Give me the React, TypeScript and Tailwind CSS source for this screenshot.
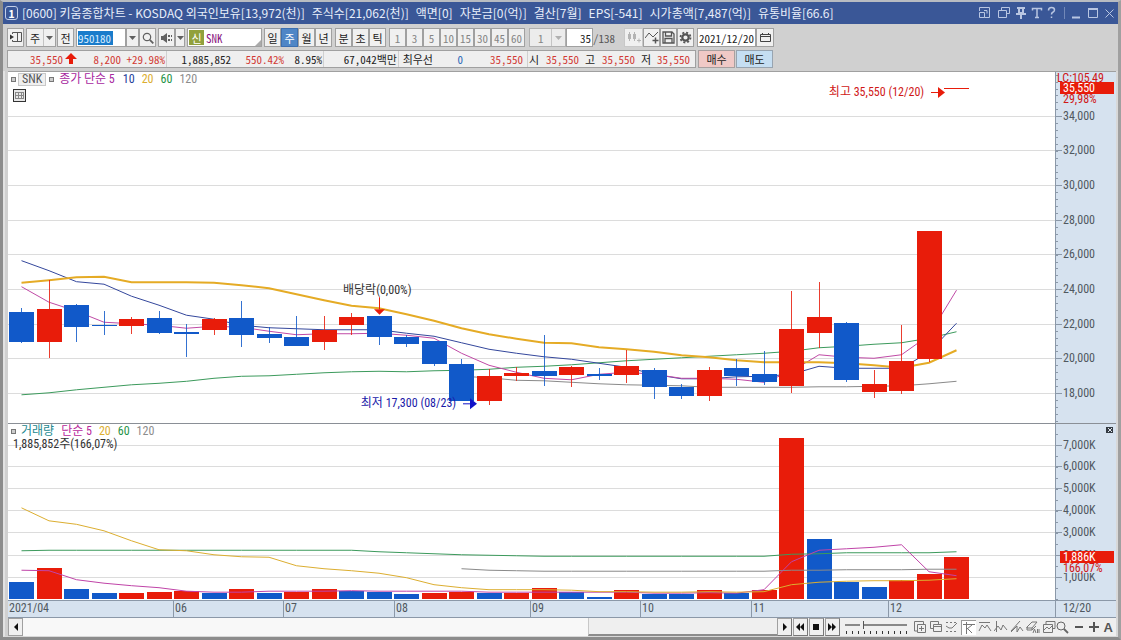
import { useState, type ReactNode } from 'react';

const UP = '#e81c0a';
const DOWN = '#1159c9';

// chart plot area, in chart units
const LEFT = 8;
const WIDTH = 1047;
const PRICE_TOP = 72;
const PRICE_HEIGHT = 351;
const VOL_TOP = 424;
const VOL_HEIGHT = 176;
const STEP = 27.5;

const centerX = (i: number) => 21.5 + i * STEP;

// [up, body top, body bottom, high, low]
type Candle = [number, number, number, number, number];

const candles: Candle[] = [
  [0, 312, 342, 308, 343],
  [1, 309, 342, 280, 358],
  [0, 305, 327, 304, 342],
  [0, 325, 326, 311, 335],
  [1, 319, 326, 317, 334],
  [0, 318, 333, 311, 334],
  [0, 332, 334, 324, 357],
  [1, 319, 330, 318, 335],
  [0, 318, 335, 301, 347],
  [0, 334, 338, 327, 343],
  [0, 337, 346, 316, 346],
  [1, 330, 342, 316, 350],
  [1, 317, 325, 313, 335],
  [0, 316, 337, 316, 345],
  [0, 337, 344, 335, 347],
  [0, 341, 364, 341, 366],
  [0, 364, 401, 359, 401],
  [1, 376, 401, 369, 405],
  [1, 373, 376, 367, 381],
  [0, 371, 376, 335, 386],
  [1, 367, 375, 366, 387],
  [0, 374, 376, 368, 380],
  [1, 366, 375, 350, 383],
  [0, 370, 387, 368, 399],
  [0, 387, 396, 384, 399],
  [1, 370, 396, 367, 401],
  [0, 368, 376, 359, 386],
  [0, 374, 382, 351, 385],
  [1, 329, 386, 291, 393],
  [1, 317, 333, 282, 348],
  [0, 323, 380, 322, 382],
  [1, 384, 392, 370, 398],
  [1, 361, 391, 325, 394],
  [1, 231, 359, 231, 362],
  [1, 88, 89, 88, 89],
];

// [up, bar top]
const volumes: [number, number][] = [
  [0, 582], [1, 568], [0, 589], [0, 593], [1, 593], [1, 592], [1, 591], [0, 593], [1, 589],
  [0, 593], [1, 592], [1, 589], [0, 591], [0, 592], [0, 594], [1, 593], [1, 592], [0, 593],
  [1, 593], [1, 588], [0, 592], [0, 597], [1, 590], [0, 594], [0, 594], [1, 590], [0, 593],
  [1, 590], [1, 438], [0, 539], [0, 582], [0, 587], [1, 580], [1, 574], [1, 557],
];

interface Average {
  color: string;
  start: number;
  width?: number;
  values: number[];
}

const priceAverages: Average[] = [
  { color: '#8a8a8a', start: 16, values: [376, 377.5, 380, 380.5, 382, 383.5, 384.5, 385, 385.5, 387, 387, 387, 387, 386.5, 386.5, 386, 385.5, 383.5, 381] },
  { color: '#3c9a5c', start: 0, values: [394.5, 392.5, 389.5, 387, 384.5, 383, 381, 378, 376, 375.5, 374, 372.5, 371.5, 371, 371.5, 370.5, 370, 369, 367, 366, 364.5, 362.5, 360.5, 359, 357.5, 356, 354.5, 353, 351, 347.5, 346, 344, 342.5, 338, 331.5] },
  { color: '#34479c', start: 0, values: [260.5, 270.5, 281.5, 284, 296, 305, 315, 319, 325, 327.5, 328.5, 329.5, 329.5, 329.5, 333, 336, 342.5, 349, 353, 356.5, 359, 363, 367, 374, 378.5, 378.5, 376.5, 376, 374, 366, 368, 368, 368, 352, 323] },
  { color: '#c04aa6', start: 0, values: [286.5, 302, 311, 322, 323.5, 325, 328, 326, 327, 331, 334.5, 333.5, 333.5, 333, 335, 338, 353, 365, 372, 378, 379.5, 374, 372, 374, 378, 378, 379, 382, 371, 354.5, 357, 358, 354.5, 335, 290] },
  { color: '#e5ab25', start: 0, width: 2, values: [282.5, 280, 277, 276.5, 282, 282, 282, 282.5, 285, 288, 294, 300, 305.5, 308, 314, 320.5, 328, 334, 338.5, 342.5, 343, 347, 349, 351.5, 355, 357, 360, 362, 362, 362, 363, 365, 367.5, 362.5, 350] },
];

const volumeAverages: Average[] = [
  { color: '#8a8a8a', start: 16, values: [569, 570.5, 571, 571.5, 571.5, 571.5, 571.5, 571.5, 571.5, 571.5, 571.5, 571.5, 570.5, 570.5, 570, 570, 570, 569.5, 569.5] },
  { color: '#3c9a5c', start: 0, values: [551, 550.5, 550.5, 550.5, 550.5, 550.5, 550.5, 550.5, 550.5, 550.5, 550.5, 550.5, 550.5, 552, 553, 554, 555, 555.5, 556, 556.5, 556.5, 556.5, 556.5, 556.5, 556.5, 556.5, 556.5, 556.5, 554.5, 554, 553, 553, 553, 553, 552] },
  { color: '#c044a8', start: 0, values: [570.5, 571, 580, 583.5, 586, 588, 591.5, 592.5, 592.5, 591.5, 591.5, 591.5, 591, 591.5, 591.5, 591.5, 591.5, 592.5, 592.5, 592.5, 592.5, 592.5, 592.5, 593.5, 593.5, 593, 593.5, 590, 562, 550.5, 549, 547.5, 545, 572, 576] },
  { color: '#dcae30', start: 0, values: [508, 521, 524.5, 531, 541, 550, 551, 555, 557, 557.5, 566, 569, 571, 573.5, 578, 585, 588, 590, 590, 590, 590.5, 592, 592, 592.5, 592.5, 592, 592.5, 592, 585, 582.5, 581.5, 581, 581, 580.5, 579] },
];

const priceTicks = [
  { label: '34,000', y: 116 },
  { label: '32,000', y: 150 },
  { label: '30,000', y: 185 },
  { label: '28,000', y: 220 },
  { label: '26,000', y: 254 },
  { label: '24,000', y: 289 },
  { label: '22,000', y: 324 },
  { label: '20,000', y: 358 },
  { label: '18,000', y: 393 },
];

const volumeTicks = [
  { label: '7,000K', y: 445 },
  { label: '6,000K', y: 466 },
  { label: '5,000K', y: 488 },
  { label: '4,000K', y: 510 },
  { label: '3,000K', y: 532 },
  { label: '2,000K', y: 555 },
  { label: '1,000K', y: 577 },
];

const chartFont = "font-['Roboto_Condensed','Noto_Sans_CJK_KR',sans-serif]";
const titleFont = "font-['Noto_Sans_CJK_KR',sans-serif]";
const monoFont = "font-['Noto_Sans_Mono_CJK_KR','Noto_Sans_CJK_KR',monospace]";

function AverageLine({ line }: { line: Average }) {
  const points = line.values.map((v, i) => `${centerX(line.start + i)},${v}`).join(' ');
  return (
    <polyline
      points={points}
      fill="none"
      stroke={line.color}
      strokeWidth={line.width ?? 1}
      vectorEffect="non-scaling-stroke"
    />
  );
}

function GridLines({ ticks }: { ticks: { y: number }[] }) {
  return (
    <g fill="#dcdcdc" shapeRendering="crispEdges">
      {ticks.map((t) => (
        <rect key={t.y} x={LEFT} y={t.y} width={WIDTH} height={1} />
      ))}
    </g>
  );
}

function PricePlot() {
  return (
    <svg
      className="absolute inset-0 h-full w-full"
      viewBox={`${LEFT} ${PRICE_TOP} ${WIDTH} ${PRICE_HEIGHT}`}
      preserveAspectRatio="none"
    >
      <GridLines ticks={priceTicks} />
      {priceAverages.map((line) => (
        <AverageLine key={line.color} line={line} />
      ))}
      <g shapeRendering="crispEdges">
        {candles.map(([up, top, bottom, high, low], i) => (
          <g key={i} fill={up ? UP : DOWN}>
            <rect x={Math.floor(centerX(i))} y={high} width={1} height={low - high} opacity={0.85} />
            <rect x={centerX(i) - 12.5} y={top} width={25} height={bottom - top} />
          </g>
        ))}
      </g>
      <path d="M379.500 297v12" stroke={UP} />
      <path d="M374 309h11l-5.500 5.500z" fill={UP} />
      <path d="M931 92.500h8" stroke={UP} />
      <path d="M938 87v11l7-5.500z" fill={UP} />
      <path d="M463 403.500h8" stroke="#1212c8" />
      <path d="M470 398v11l7-5.500z" fill="#1212c8" />
    </svg>
  );
}

function VolumePlot() {
  return (
    <svg
      className="absolute inset-0 h-full w-full"
      viewBox={`${LEFT} ${VOL_TOP} ${WIDTH} ${VOL_HEIGHT}`}
      preserveAspectRatio="none"
    >
      <GridLines ticks={volumeTicks} />
      <g shapeRendering="crispEdges">
        {volumes.map(([up, top], i) => (
          <rect key={i} x={centerX(i) - 12.5} y={top} width={25} height={599 - top} fill={up ? UP : DOWN} />
        ))}
      </g>
      {volumeAverages.map((line) => (
        <AverageLine key={line.color} line={line} />
      ))}
    </svg>
  );
}

interface AxisProps {
  ticks: { label: string; y: number }[];
  top: number;
  height: number;
  minor: number;
}

function Axis({ ticks, top, height, minor }: AxisProps) {
  const minorTicks: number[] = [];
  for (let y = ticks[ticks.length - 1].y; y > top; y -= minor) minorTicks.push(y);
  for (let y = ticks[ticks.length - 1].y; y < top + height; y += minor) minorTicks.push(y);
  return (
    <>
      <svg
        className="absolute inset-y-0 left-0 h-full w-2"
        viewBox={`0 ${top} 8 ${height}`}
        preserveAspectRatio="none"
        shapeRendering="crispEdges"
      >
        {minorTicks.map((y, i) => (
          <rect key={i} x={0} y={Math.round(y)} width={2} height={1} fill="#8b98a8" />
        ))}
        {ticks.map((t) => (
          <rect key={t.y} x={0} y={t.y} width={6} height={1} fill="#8b98a8" />
        ))}
      </svg>
      {ticks.map((t) => (
        <span
          key={t.label}
          className="absolute left-[7px] -translate-y-1/2 text-xs leading-4 text-[#505860]"
          style={{ top: `${((t.y - top) / height) * 100}%` }}
        >
          {t.label}
        </span>
      ))}
    </>
  );
}

function ToolButton({ children, label, className = '' }: { children: ReactNode; label?: string; className?: string }) {
  return (
    <button
      type="button"
      aria-label={label}
      className={`flex shrink-0 items-center justify-center self-stretch border border-[#a0a0a0] bg-[#f0f0f0] ${className}`}
    >
      {children}
    </button>
  );
}

function Caret({ className = 'text-[#606060]' }: { className?: string }) {
  return (
    <svg className={`h-1 w-[7px] ${className}`} viewBox="0 0 7 4" fill="currentColor">
      <path d="M0 0h7L3.500 4z" />
    </svg>
  );
}

const titleFields = [
  '[0600] 키움종합차트 - KOSDAQ 외국인보유[13,972(천)]',
  '주식수[21,062(천)]',
  '액면[0]',
  '자본금[0(억)]',
  '결산[7월]',
  'EPS[-541]',
  '시가총액[7,487(억)]',
  '유통비율[66.6]',
];

function TitleBar() {
  return (
    <header className={`flex h-[22px] shrink-0 items-center justify-between bg-[#3a5797] pl-[2px] pr-1 text-xs text-[#e8eefa] ${titleFont}`}>
      <div className="flex min-w-0 items-center gap-1">
        <span className="flex h-[14px] w-[13px] shrink-0 items-center justify-center rounded-[3px] border border-[#c3cfe8] text-[11px] font-bold text-white">
          1
        </span>
        <h1 className="flex gap-[7px] overflow-hidden whitespace-nowrap">
          {titleFields.map((field) => (
            <span key={field}>{field}</span>
          ))}
        </h1>
      </div>
      <svg className="h-4 w-[136px] shrink-0" viewBox="0 0 136 16" fill="none" stroke="#b9c6e2">
        <path d="M1.500 6V2.500h10v10H6.500M1.500 7.500h5v5h-5zM6 5.500h3v3" />
        <path d="M23.500 5.500v-3h8v6h-3M20.500 5.500h8v7h-8z" />
        <path d="M39 3h8M41 3v5h4V3M38 9h10M43 9v5" strokeWidth="2" />
        <path d="M54.500 5.500V3.500h9v2M59 3.500v9M57 12.500h4" strokeWidth="1.500" />
        <path d="M70.500 5.500q0-3 3-3t3 2.500q0 1.500-2 2.500-1 .6-1 2M73.500 11.500v1.500" strokeWidth="1.500" />
        <path d="M86.500 2v12" stroke="#7288b8" />
        <path d="M94 12.500h8" strokeWidth="2" />
        <path d="M110.500 4.500h9v8h-9z" />
        <path d="M110 4h10" strokeWidth="2" />
        <path d="M127.500 4.500l8 8M135.500 4.500l-8 8" />
      </svg>
    </header>
  );
}

const periods = ['일', '주', '월', '년'];
const units = ['분', '초', '틱'];
const minutes = ['1', '3', '5', '10', '15', '30', '45', '60'];

function Toolbar() {
  const [period, setPeriod] = useState('주');
  return (
    <div className={`flex h-[19px] items-center text-[11px] leading-4 text-[#222] ${monoFont}`}>
      <ToolButton label="패널" className="w-[17px]">
        <svg className="h-[13px] w-[13px]" viewBox="0 0 13 13" fill="none" stroke="#555">
          <path d="M3.500 3V1.500h9v9h-9V9M8.500 2v8" />
          <path d="M1 3.500v5l4-2.500z" fill="#333" stroke="none" />
        </svg>
      </ToolButton>
      <div className="relative ml-[2px] flex h-[19px] w-[30px] items-center border border-[#a0a0a0] bg-[#f0f0f0]">
        <select aria-label="구분" className="h-full w-full appearance-none bg-transparent pl-[3px]">
          <option>주</option>
        </select>
        <span className="pointer-events-none absolute inset-y-0 right-0 flex w-3 items-center justify-center border-l border-[#c4c4c4]">
          <Caret />
        </span>
      </div>
      <ToolButton className="ml-[1px] w-[17px]">전</ToolButton>
      <div className="ml-[2px] flex h-[19px] w-[50px] items-center border border-[#a0a0a0] bg-white pl-[1px]">
        <input
          aria-label="종목코드"
          defaultValue="950180"
          className="h-[14px] w-[35px] bg-[#1a7ccb] text-[#d8ecff] outline-none"
        />
      </div>
      <ToolButton label="종목 목록" className="w-[13px]"><Caret /></ToolButton>
      <ToolButton label="검색" className="w-[17px]">
        <svg className="h-3 w-3" viewBox="0 0 12 12" fill="none" stroke="#606060">
          <circle cx="5" cy="5" r="3.700" strokeWidth="1.200" />
          <path d="M7.800 7.800l3.500 3.500" strokeWidth="1.800" />
        </svg>
      </ToolButton>
      <ToolButton label="음성" className="ml-[2px] w-[17px]">
        <svg className="h-3 w-3" viewBox="0 0 12 12" fill="#606060">
          <path d="M0 4h2l4-3v10L2 8H0zM7 3h2v2H7zM7 7h2v2H7zM10 3h1v2h-1zM10 7h1v2h-1z" />
        </svg>
      </ToolButton>
      <ToolButton label="음성 설정" className="w-[10px]"><Caret /></ToolButton>
      <div className="relative ml-[2px] flex h-[19px] w-[75px] items-center border border-[#a0a0a0] bg-white pl-[1px]">
        <span className="flex h-[15px] w-[15px] items-center justify-center bg-[#91a03c] text-white">신</span>
        <span className="pl-[2px] text-[#8a1480]">SNK</span>
        <svg className="absolute bottom-0 right-0 h-[6px] w-[6px]" viewBox="0 0 6 6">
          <path d="M6 0v6H0z" fill="#aaa" />
        </svg>
      </div>
      <div className="ml-[2px] flex">
        {periods.map((p) => (
          <button
            key={p}
            type="button"
            onClick={() => setPeriod(p)}
            className={`flex h-[19px] w-[17px] items-center justify-center border ${
              p === period ? 'border-[#3d6fb0] bg-[#4f86c6] text-white' : 'border-[#a0a0a0] bg-[#f0f0f0]'
            }`}
          >
            {p}
          </button>
        ))}
      </div>
      <div className="ml-[3px] flex self-stretch">
        {units.map((u) => (
          <ToolButton key={u} className="w-[17px]">{u}</ToolButton>
        ))}
      </div>
      <div className="ml-[3px] flex self-stretch text-[#858585]">
        {minutes.map((m) => (
          <ToolButton key={m} className="w-[17px]">{m}</ToolButton>
        ))}
      </div>
      <div className="relative ml-[4px] h-[19px] w-[37px] border border-[#b0b0b0] bg-[#ececec] text-[#858585]">
        <select aria-label="간격" className="h-full w-full appearance-none bg-transparent pl-[8px]">
          <option>1</option>
        </select>
        <span className="pointer-events-none absolute inset-y-0 right-0 flex w-[14px] items-center justify-center border-l border-[#c4c4c4]">
          <Caret className="text-[#b0b0b0]" />
        </span>
      </div>
      <input
        aria-label="표시 개수"
        defaultValue="35"
        className="h-[19px] w-[27px] border border-[#a0a0a0] bg-white pr-[1px] text-right"
      />
      <span className="w-[31px] text-[#555]">/138</span>
      <ToolButton label="캔들" className="w-[19px] border-[#c8c8c8] bg-[#dedede]">
        <svg className="h-3 w-[14px]" viewBox="0 0 14 12" fill="#b4b4b4">
          <path d="M1 2h3v5H1zM2 0h1v9H2zM6 2h3v5H6zM7 0h1v9H7zM10 8h4v1h-4zM11.500 6.500h1v4h-1z" />
        </svg>
      </ToolButton>
      <ToolButton label="지표 추가" className="w-[17px]">
        <svg className="h-[13px] w-[14px]" viewBox="0 0 14 13" fill="none" stroke="#555">
          <path d="M0 7l4-5 4 4 5-5" />
          <path d="M10.500 6.500v6M7.500 9.500h6" strokeWidth="1.500" />
        </svg>
      </ToolButton>
      <ToolButton label="저장" className="w-[17px]">
        <svg className="h-[13px] w-[13px]" viewBox="0 0 13 13" fill="none" stroke="#555" strokeWidth="1.300">
          <path d="M1 1h9l2 2v9H1zM3.500 1v4h6V1M3 12V7.500h7V12" />
        </svg>
      </ToolButton>
      <ToolButton label="설정" className="w-[17px]">
        <svg className="h-[13px] w-[13px]" viewBox="0 0 13 13" fill="none" stroke="#555">
          <circle cx="6.500" cy="6.500" r="3.200" strokeWidth="2.200" />
          <circle cx="6.500" cy="6.500" r="5" strokeWidth="1.800" strokeDasharray="2 1.930" />
        </svg>
      </ToolButton>
      <input
        aria-label="기준일"
        defaultValue="2021/12/20"
        className="ml-[3px] h-[19px] w-[59px] border border-[#a0a0a0] bg-white pl-[1px]"
      />
      <ToolButton label="달력" className="w-[18px]">
        <svg className="h-[11px] w-[11px]" viewBox="0 0 11 11" fill="none" stroke="#444">
          <path d="M.5 2.500h10v7H.5zM.5 4.500h10" />
          <path d="M2.500 1v2M8.500 1v2" />
        </svg>
      </ToolButton>
    </div>
  );
}

function QuoteRow() {
  return (
    <div className={`flex h-[18px] items-center text-[11px] leading-4 text-[#222] ${monoFont}`}>
      <div className="flex h-full items-center border border-[#a0a0a0] bg-[#efefef] text-[#d23a34]">
        <span className="w-[55px] text-right">35,550</span>
        <svg className="ml-[2px] h-3 w-3" viewBox="0 0 12 12" fill={UP}>
          <path d="M6 0l6 6H8v5H4V6H0z" />
        </svg>
        <span className="w-[44px] text-right">8,200</span>
        <span className="w-[44px] text-right">+29.98%</span>
        <span className="ml-[1px] h-full w-[65px] border-l border-[#d0d0d0] text-right text-[#222]">1,885,852</span>
        <span className="w-[53px] text-right">550.42%</span>
        <span className="w-[38px] text-right text-[#222]">8.95%</span>
        <span className="ml-[1px] h-full w-[74px] border-l border-[#d0d0d0] text-right text-[#222]">67,042백만</span>
        <span className="ml-[1px] h-full w-[35px] border-l border-[#d0d0d0] text-right text-[#222]">최우선</span>
        <span className="w-[30px] text-right text-[#2b66b8]">0</span>
        <span className="w-[60px] text-right">35,550</span>
        <span className="ml-[4px] h-full w-[12px] border-l border-[#d0d0d0] text-right text-[#222]">시</span>
        <span className="w-[40px] text-right">35,550</span>
        <span className="w-[16px] text-right text-[#222]">고</span>
        <span className="w-[40px] text-right">35,550</span>
        <span className="w-[16px] text-right text-[#222]">저</span>
        <span className="w-[40px] pr-[1px] text-right">35,550</span>
        <span className="w-1" />
      </div>
      <button type="button" className="ml-[2px] h-full w-[37px] border border-[#a8a0a0] bg-[#f0c9c6] leading-none">매수</button>
      <button type="button" className="ml-[1px] h-full w-[37px] border border-[#98a4b0] bg-[#c5def2] leading-none">매도</button>
    </div>
  );
}

function LegendBox() {
  return <span className="h-[5px] w-[5px] border border-[#777] bg-[#ccc]" />;
}

function PricePanel() {
  return (
    <section className="flex min-h-0 flex-[352] border-b border-[#8a8f96]">
      <div className="relative flex-1 overflow-hidden bg-white">
        <PricePlot />
        <div className="relative flex items-center pl-[3px] pt-[1px] text-xs leading-[13px]">
          <LegendBox />
          <span className="ml-[2px] border border-[#c8c8c8] bg-[#efefef] px-[3px] leading-[11px] text-[#555]">SNK</span>
          <span className="ml-[3px] flex"><LegendBox /></span>
          <span className="ml-[5px] text-[#a828a0]">종가 단순 5</span>
          <span className="ml-2 text-[#24409a]">10</span>
          <span className="ml-[7px] text-[#dcae30]">20</span>
          <span className="ml-[7px] text-[#1f9347]">60</span>
          <span className="ml-[7px] text-[#8c8c8c]">120</span>
        </div>
        <button type="button" aria-label="표" className="relative ml-[5px] mt-[3px] block h-[13px] w-[13px]">
          <svg className="h-full w-full" viewBox="0 0 13 13" fill="none" stroke="#333" shapeRendering="crispEdges">
            <path d="M.5.5h12v12H.5z" fill="#e8e8e8" />
            <path d="M2 3.500h9M2 6.500h9M2 9.500h9M2.500 3v7M5.500 3v7M8.500 3v7M10.500 3v7" stroke="#888" />
          </svg>
        </button>
        <span className="absolute left-[78.400%] top-[3.700%] text-xs leading-[14px] text-[#d01818]">최고 35,550 (12/20)</span>
        <span className="absolute left-[32%] top-[60%] text-xs leading-[14px] text-[#333]">배당락(0,00%)</span>
        <span className="absolute left-[33.700%] top-[92.200%] text-xs leading-[14px] text-[#1a1aa8]">최저 17,300 (08/23)</span>
      </div>
      <div className="relative w-[61px] shrink-0 overflow-hidden border-l border-[#8b98a8] bg-[#d6e2ef]">
        <Axis ticks={priceTicks} top={PRICE_TOP} height={PRICE_HEIGHT} minor={6.92} />
        <div className="absolute inset-x-0 top-0 text-xs leading-3 text-[#d01818]">
          <div className="h-[10px] whitespace-nowrap pl-[1px]">LC:105,49</div>
          <div className="relative ml-1 mr-[2px] bg-[#e81c0a] pl-[3px] text-white">35,550</div>
          <div className="pl-[7px] leading-[11px]">29,98%</div>
        </div>
      </div>
    </section>
  );
}

function VolumePanel() {
  return (
    <section className="flex min-h-0 flex-[176]">
      <div className="relative flex-1 overflow-hidden bg-white">
        <VolumePlot />
        <div className="relative flex items-center pl-[3px] pt-[1px] text-xs leading-[13px]">
          <LegendBox />
          <span className="ml-[5px] text-[#23898f]">거래량</span>
          <span className="ml-[7px] text-[#b8289c]">단순 5</span>
          <span className="ml-[7px] text-[#dcae30]">20</span>
          <span className="ml-[7px] text-[#1f9347]">60</span>
          <span className="ml-[7px] text-[#8c8c8c]">120</span>
        </div>
        <p className="relative pl-[5px] text-xs leading-[12px] text-[#333]">1,885,852주(166,07%)</p>
      </div>
      <div className="relative w-[61px] shrink-0 overflow-hidden border-l border-[#8b98a8] bg-[#d6e2ef]">
        <Axis ticks={volumeTicks} top={VOL_TOP} height={VOL_HEIGHT} minor={11} />
        <button
          type="button"
          aria-label="닫기"
          className="absolute right-[3px] top-[3px] flex h-[6px] w-[7px] items-center justify-center bg-[#333a42]"
        >
          <svg className="h-1 w-1" viewBox="0 0 4 4" stroke="#dfe6ee"><path d="M0 0l4 4M4 0L0 4" /></svg>
        </button>
        <div className="absolute inset-x-0 top-[72%] text-xs leading-3">
          <div className="ml-1 mr-[2px] bg-[#e81c0a] pl-[3px] text-white">1,886K</div>
          <div className="ml-[7px] h-[10px] w-[42px] bg-[#d6e2ef] leading-[10px] text-[#d01818]">166,07%</div>
        </div>
      </div>
    </section>
  );
}

function DateAxis() {
  return (
    <div className="flex h-[18px] shrink-0 border-y border-[#8b98a8] bg-[#d6e2ef] text-xs leading-[15px] text-[#505860]">
      <div className="grid flex-1 grid-cols-[330fr_220fr_222fr_272fr_220fr_222fr_274fr_334fr]">
        <span className="pl-[1px]">2021/04</span>
        {['06', '07', '08', '09', '10', '11', '12'].map((m) => (
          <span key={m} className="border-l border-[#8b98a8] pl-[1px]">{m}</span>
        ))}
      </div>
      <span className="w-[61px] border-l border-[#8b98a8] pl-[7px]">12/20</span>
    </div>
  );
}

const playIcons = [
  { label: '재생', d: 'M4 1v8l4-4z' },
  { label: '뒤로', d: 'M5 1v8L1 5zM9 1v8L5 5z' },
  { label: '정지', d: 'M2 2h6v6H2z' },
  { label: '앞으로', d: 'M1 1v8l4-4zM5 1v8l4-4z' },
];

const drawTools = [
  { label: '화면 추가', d: 'M4 11H1.500V1.500h9V4M4.500 4.500h8v8h-8zM8.500 6v5M6 8.500h5' },
  { label: '화면 복사', d: 'M4 8.500H1.500v-7h8V4M4.500 4.500h8v7h-8zM4.500 6.500h8' },
  { label: '추세선', d: 'M1 2.500h2M5 2.500h2M9 2.500h2M1 11.500h2M5 11.500h2M9 11.500h2M1 6l3 2 3 0 5-5' },
  { label: '십자선', d: 'M1 3.500h12M4.500 1v12M5 8l5-4M5 7l5 5' },
  { label: '고점', d: 'M1 2.500h11M1 11l3-6 3 3 2-3 4 6' },
  { label: '저점', d: 'M2.500 1v11M0 11l4-5 3 4 2-5 4 5' },
  { label: '분석', d: 'M1 11L10 1M1 12l6-6 0 6 3-5 3 4' },
  { label: '전체 지우기', d: 'M1 7l5-5h5L6 8H1zM1 7v3h5V8M6 10l4-4M7 13l1.500-4L10 13M11.500 9v4M13 9v4' },
  { label: '이미지', d: 'M4 4V1.500h9v7h-2M1.500 4.500h9v8h-9zM2 10l3-3 2 2 3-3' },
];

function BottomBar() {
  const [speed, setSpeed] = useState(28);
  return (
    <footer className="flex h-[18px] shrink-0 items-center bg-[#efefef]">
      <ToolButton label="왼쪽" className="w-[15px]">
        <svg className="h-2 w-2" viewBox="0 0 8 8"><path d="M6 0v8L2 4z" fill="#111" /></svg>
      </ToolButton>
      <div className="flex h-full flex-1 bg-[#f8f8f8]">
        <div className="ml-auto h-full w-1/4 border-b-2 border-l border-b-[#8c8c8c] border-l-[#c8c8c8] bg-[#efefef]" />
      </div>
      <div className="flex gap-[1px] self-stretch">
        {playIcons.map((icon) => (
          <ToolButton key={icon.label} label={icon.label} className="w-[15px] border-b-[#777] border-r-[#777]">
            <svg className="h-[10px] w-[10px]" viewBox="0 0 10 10" fill="#111"><path d={icon.d} /></svg>
          </ToolButton>
        ))}
      </div>
      <div className="relative ml-1 h-[18px] w-[64px]">
        <svg className="absolute inset-0 h-full w-full" viewBox="0 0 64 18" shapeRendering="crispEdges">
          <path d="M1 6.500h62" stroke="#888" strokeWidth="2" />
          <path d="M2.500 13v3M8.500 13v3M14.500 13v3M20.500 13v3M26.500 13v3M32.500 13v3M38.500 13v3M44.500 13v3M50.500 13v3M56.500 13v3M62.500 13v3" stroke="#333" />
        </svg>
        <input
          type="range"
          aria-label="재생 속도"
          value={speed}
          onChange={(e) => setSpeed(Number(e.target.value))}
          className="absolute left-0 top-[3px] h-2 w-full appearance-none bg-transparent [&::-webkit-slider-thumb]:h-2 [&::-webkit-slider-thumb]:w-1 [&::-webkit-slider-thumb]:appearance-none [&::-webkit-slider-thumb]:border-r [&::-webkit-slider-thumb]:border-[#555] [&::-webkit-slider-thumb]:bg-[#efefef]"
        />
      </div>
      <div className="ml-[5px] flex items-center gap-[2px]">
        {drawTools.map((tool, i) => (
          <button
            key={tool.label}
            type="button"
            aria-label={tool.label}
            className={i === 3 ? 'border-l border-t border-[#999] bg-white' : ''}
          >
            <svg className="h-[14px] w-[14px]" viewBox="0 0 14 14" fill="none" stroke="#777">
              <path d={tool.d} />
            </svg>
          </button>
        ))}
      </div>
      <div className="flex items-center gap-[5px] pr-[3px]">
        <button type="button" aria-label="찾기">
          <svg className="h-[13px] w-[13px]" viewBox="0 0 13 13" fill="none" stroke="#666">
            <circle cx="5" cy="5" r="4" />
            <path d="M8 8l4 4" strokeWidth="1.800" />
          </svg>
        </button>
        <button type="button" aria-label="축소">
          <svg className="h-[10px] w-[10px]" viewBox="0 0 10 10" stroke="#555" strokeWidth="2"><path d="M1 5h8" /></svg>
        </button>
        <button type="button" aria-label="확대">
          <svg className="h-[10px] w-[10px]" viewBox="0 0 10 10" stroke="#555" strokeWidth="2"><path d="M0 5h10M5 0v10" /></svg>
        </button>
        <button type="button" className="font-['Liberation_Sans',sans-serif] text-[13px] font-bold leading-none text-[#555]">A</button>
      </div>
    </footer>
  );
}

export default function App() {
  return (
    <div className="flex h-screen flex-col border-b-[3px] border-l-[3px] border-r-[3px] border-t-2 border-b-[#8c8c8c] border-l-[#8c8c8c] border-r-[#a0a0a0] border-t-[#b8bcc2]">
      <TitleBar />
      <div className="flex min-h-0 flex-1 flex-col bg-[#d0d0d0]">
        <div className="flex shrink-0 flex-col gap-[3px] px-1 pb-[3px] pt-1">
          <Toolbar />
          <QuoteRow />
        </div>
        <main className={`flex min-h-0 flex-1 flex-col border-l-2 border-r-2 border-b border-l-[#e2e2e2] border-r-[#d8d8d8] border-b-[#d8d8d8] pl-[3px] ${chartFont}`}>
          <div className="flex min-h-0 flex-1 flex-col border-t border-[#a0a0a0]">
            <PricePanel />
            <VolumePanel />
            <DateAxis />
          </div>
          <BottomBar />
        </main>
      </div>
    </div>
  );
}
